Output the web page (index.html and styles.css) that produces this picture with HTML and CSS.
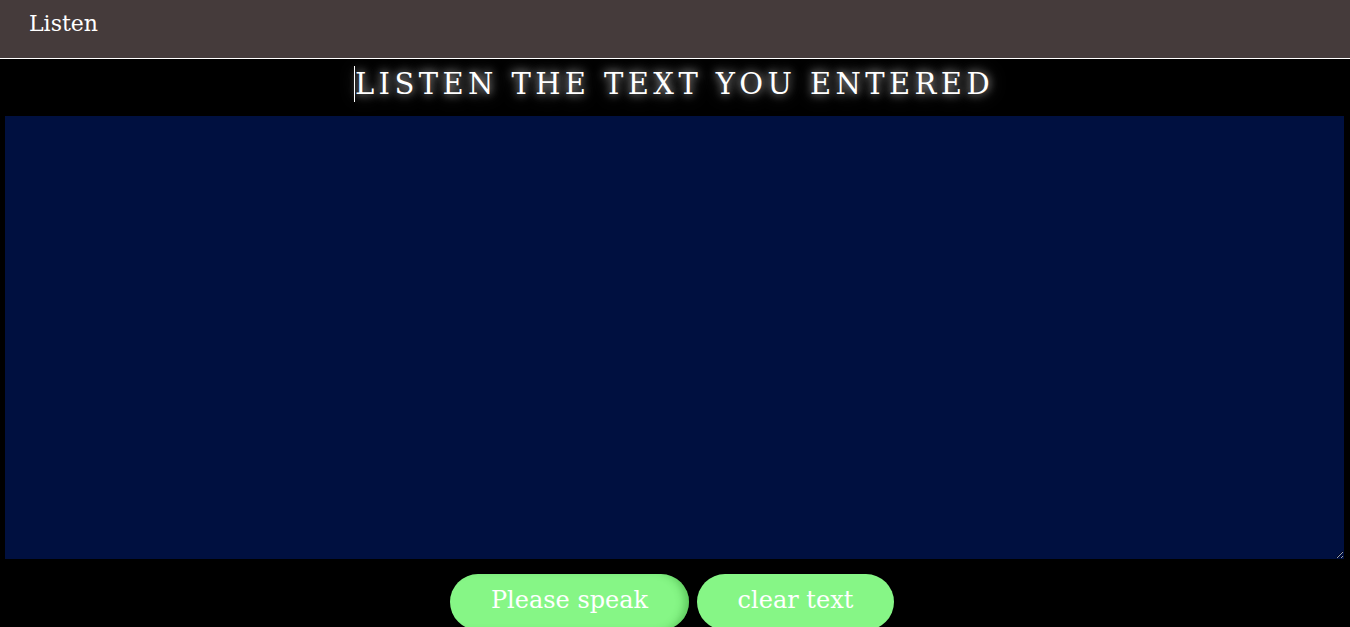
FILE: index.html
```html
<!DOCTYPE html>
<html lang="en">
<head>
<meta charset="utf-8">
<title>Listen</title>
<link rel="stylesheet" href="styles.css">
</head>
<body>
<nav class="navbar">
  <span class="brand">Listen</span>
</nav>
<main class="page">
  <h1 class="title"><span class="typed">LISTEN THE TEXT YOU ENTERED</span></h1>
  <textarea class="text-box"></textarea>
  <div class="actions">
    <button class="btn btn-speak">Please speak</button>
    <button class="btn btn-clear">clear text</button>
  </div>
</main>
</body>
</html>
```
FILE: styles.css
```css
html, body {
  margin: 0;
  padding: 0;
}
body {
  background: #000;
  font-family: "DejaVu Serif", "Liberation Serif", serif;
  color: #fff;
  height: 627px;
  overflow: hidden;
}
.navbar {
  height: 58px;
  background: #453b3b;
  border-bottom: 1px solid #fff;
  box-sizing: content-box;
  display: flex;
  align-items: flex-start;
  padding-left: 29px;
}
.brand {
  font-size: 22px;
  line-height: 22px;
  margin-top: 13px;
  color: #fff;
}
.page {
  width: calc(100% - 1px);
  display: flex;
  flex-direction: column;
  align-items: center;
}
.title {
  margin: 7px 0 0 0;
  font-size: 29px;
  font-weight: 400;
  letter-spacing: 4.4px;
  line-height: 36px;
  height: 50px;
  padding-right: 1px;
  text-shadow: 0 0 10px rgba(255,255,255,0.75), 0 0 18px rgba(255,255,255,0.35);
}
.typed {
  display: inline-block;
  border-left: 1px solid #fff;
}
.text-box {
  width: 1339px;
  height: 443px;
  box-sizing: border-box;
  margin: 0;
  background: #001040;
  border: none;
  outline: none;
  color: #fff;
  display: block;
  resize: vertical;
}
.actions {
  display: flex;
  gap: 8px;
  margin-top: 15px;
  margin-right: 5px;
}
.btn {
  height: 56px;
  border: none;
  border-radius: 28px;
  background: #86f686;
  color: #fff;
  font-family: "DejaVu Serif", "Liberation Serif", serif;
  font-size: 24px;
  white-space: nowrap;
  padding: 0 0 4px 0;
  display: flex;
  align-items: center;
  justify-content: center;
}
.btn-speak {
  width: 239px;
  box-shadow: inset -8px 0 8px -4px rgba(40,140,40,0.45);
}
.btn-clear {
  width: 197px;
}
```
